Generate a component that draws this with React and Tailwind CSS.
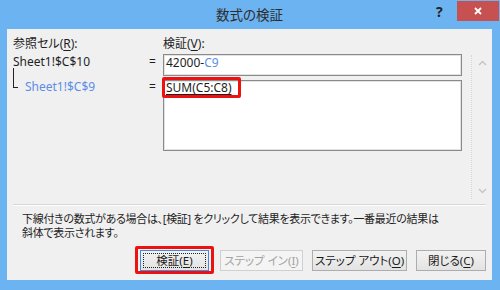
import React from 'react';

const font = "font-['Noto_Sans','Noto_Sans_CJK_JP',sans-serif] [font-feature-settings:'palt']";

function Key({ children }) {
  return <span className="underline underline-offset-2">{children}</span>;
}

function Chevron({ down }) {
  return (
    <svg width="9" height="6" viewBox="0 0 9 6" className="block">
      <path
        d={down ? 'M1 1 L4.5 4.5 L8 1' : 'M1 5 L4.5 1.5 L8 5'}
        fill="none"
        stroke="#c4c4c4"
        strokeWidth="1.4"
      />
    </svg>
  );
}

function DialogButton({ children, width, focused, disabled }) {
  const border = focused ? 'border-[#3c8ee0]' : disabled ? 'border-[#d0d0d0]' : 'border-[#adadad]';
  const text = disabled ? 'text-[#a3a3a3]' : 'text-[#1a1a1a]';
  const bg = disabled ? 'bg-[#f4f4f4]' : 'bg-gradient-to-b from-[#f2f2f2] to-[#e3e3e3]';
  return (
    <div className={`h-[21px] border p-[2px] flex ${border} ${bg} ${width}`}>
      <div
        className={`flex-1 flex items-center justify-center whitespace-nowrap text-[11.5px] leading-[14px] ${text} ${
          focused ? 'border border-dotted border-[#222]' : ''
        }`}
      >
        {children}
      </div>
    </div>
  );
}

export default function App() {
  return (
    <div className={`w-[500px] h-[290px] bg-[#6cb3f1] flex flex-col pl-[7px] pr-[8px] pb-[10px] ${font}`}>
      {/* title bar */}
      <div className="h-[29px] flex items-start">
        <div className="w-[56px]" />
        <div className="flex-1 text-center text-[13.5px] leading-[18px] pt-[6px] text-[#2d2d2d]">数式の検証</div>
        <div className="w-[14px] pt-[3px] text-[14px] font-bold leading-[18px] text-[#222] mr-[7px]">?</div>
        <div className="w-[42px] h-[20px] mt-[1px] -mr-[7px] bg-[#c75050] flex items-center justify-center">
          <svg width="10" height="10" viewBox="0 0 10 10">
            <path d="M2 2 L8 8 M8 2 L2 8" stroke="#fff" strokeWidth="1.8" />
          </svg>
        </div>
      </div>

      {/* client */}
      <div className="flex-1 bg-[#f0f0f0] flex flex-col text-[#1e1e1e]">
        <div className="flex">
          <div className="pl-[6px] pt-[8px]">
            <div className="grid grid-cols-[136px_14px_299px] text-[12px] leading-[14px]">
              <div>
                参照セル(<Key>R</Key>):
              </div>
              <div />
              <div>
                検証(<Key>V</Key>):
              </div>
            </div>
            <div className="grid grid-cols-[136px_14px_299px] grid-rows-[22px_71px] gap-y-[4px] mt-[3px] text-[12px] leading-[14px]">
              <div className="pt-[1px]">Sheet1!$C$10</div>
              <div className="pt-[1px]">=</div>
              <div className="border border-[#8a8a8a] bg-white pl-[2px] pt-[1px] shadow-[inset_0_0_0_1px_#e3e3e3]">
                42000-<span className="text-[#5b8ee6]">C9</span>
              </div>

              <div className="flex items-start">
                <div className="-mt-[12px] h-[20px] w-[5px] border-l border-b border-[#222]" />
                <div className="ml-[7px] text-[#5b8ee6]">Sheet1!$C$9</div>
              </div>
              <div>=</div>
              <div className="border border-[#8a8a8a] bg-white pl-[2px] shadow-[inset_0_0_0_1px_#e3e3e3]">
                <span className="relative underline underline-offset-2">
                  SUM(C5:C8)
                  <span className="absolute -left-[4px] -top-[2px] w-[79px] h-[21px] border-[3px] border-[#ee1111] rounded-[2px]" />
                </span>
              </div>
            </div>
          </div>
          <div className="ml-[9px] mt-[26px] h-[144px] w-[21px] border-l border-dotted border-[#d6d6d6] flex flex-col items-center justify-between py-[5px]">
            <Chevron />
            <Chevron down />
          </div>
        </div>

        <div className="mx-[6px] mt-[5px] border-t border-[#d6d6d6] border-b-white border-b" />

        <div className="pl-[15px] pt-[6px] text-[11px] leading-[14px] tracking-[-0.3px] text-[#1e1e1e]">
          下線付きの数式がある場合は、[検証] をクリックして結果を表示できます。一番最近の結果は
          <br />
          斜体で表示されます。
        </div>

        <div className="flex justify-end pr-[6px] mt-[10px] gap-[9px]">
          <div className="relative mr-[2px]">
            <DialogButton width="w-[69px]" focused>
              検証(<Key>E</Key>)
            </DialogButton>
            <span className="absolute -left-[5px] -top-[4px] w-[79px] h-[28px] border-[3px] border-[#ee1111] rounded-[2px]" />
          </div>
          <DialogButton width="w-[83px]" disabled>
            ステップ イン(<Key>I</Key>)
          </DialogButton>
          <DialogButton width="w-[95px]">
            ステップ アウト(<Key>O</Key>)
          </DialogButton>
          <DialogButton width="w-[70px]">
            閉じる(<Key>C</Key>)
          </DialogButton>
        </div>
      </div>
    </div>
  );
}
